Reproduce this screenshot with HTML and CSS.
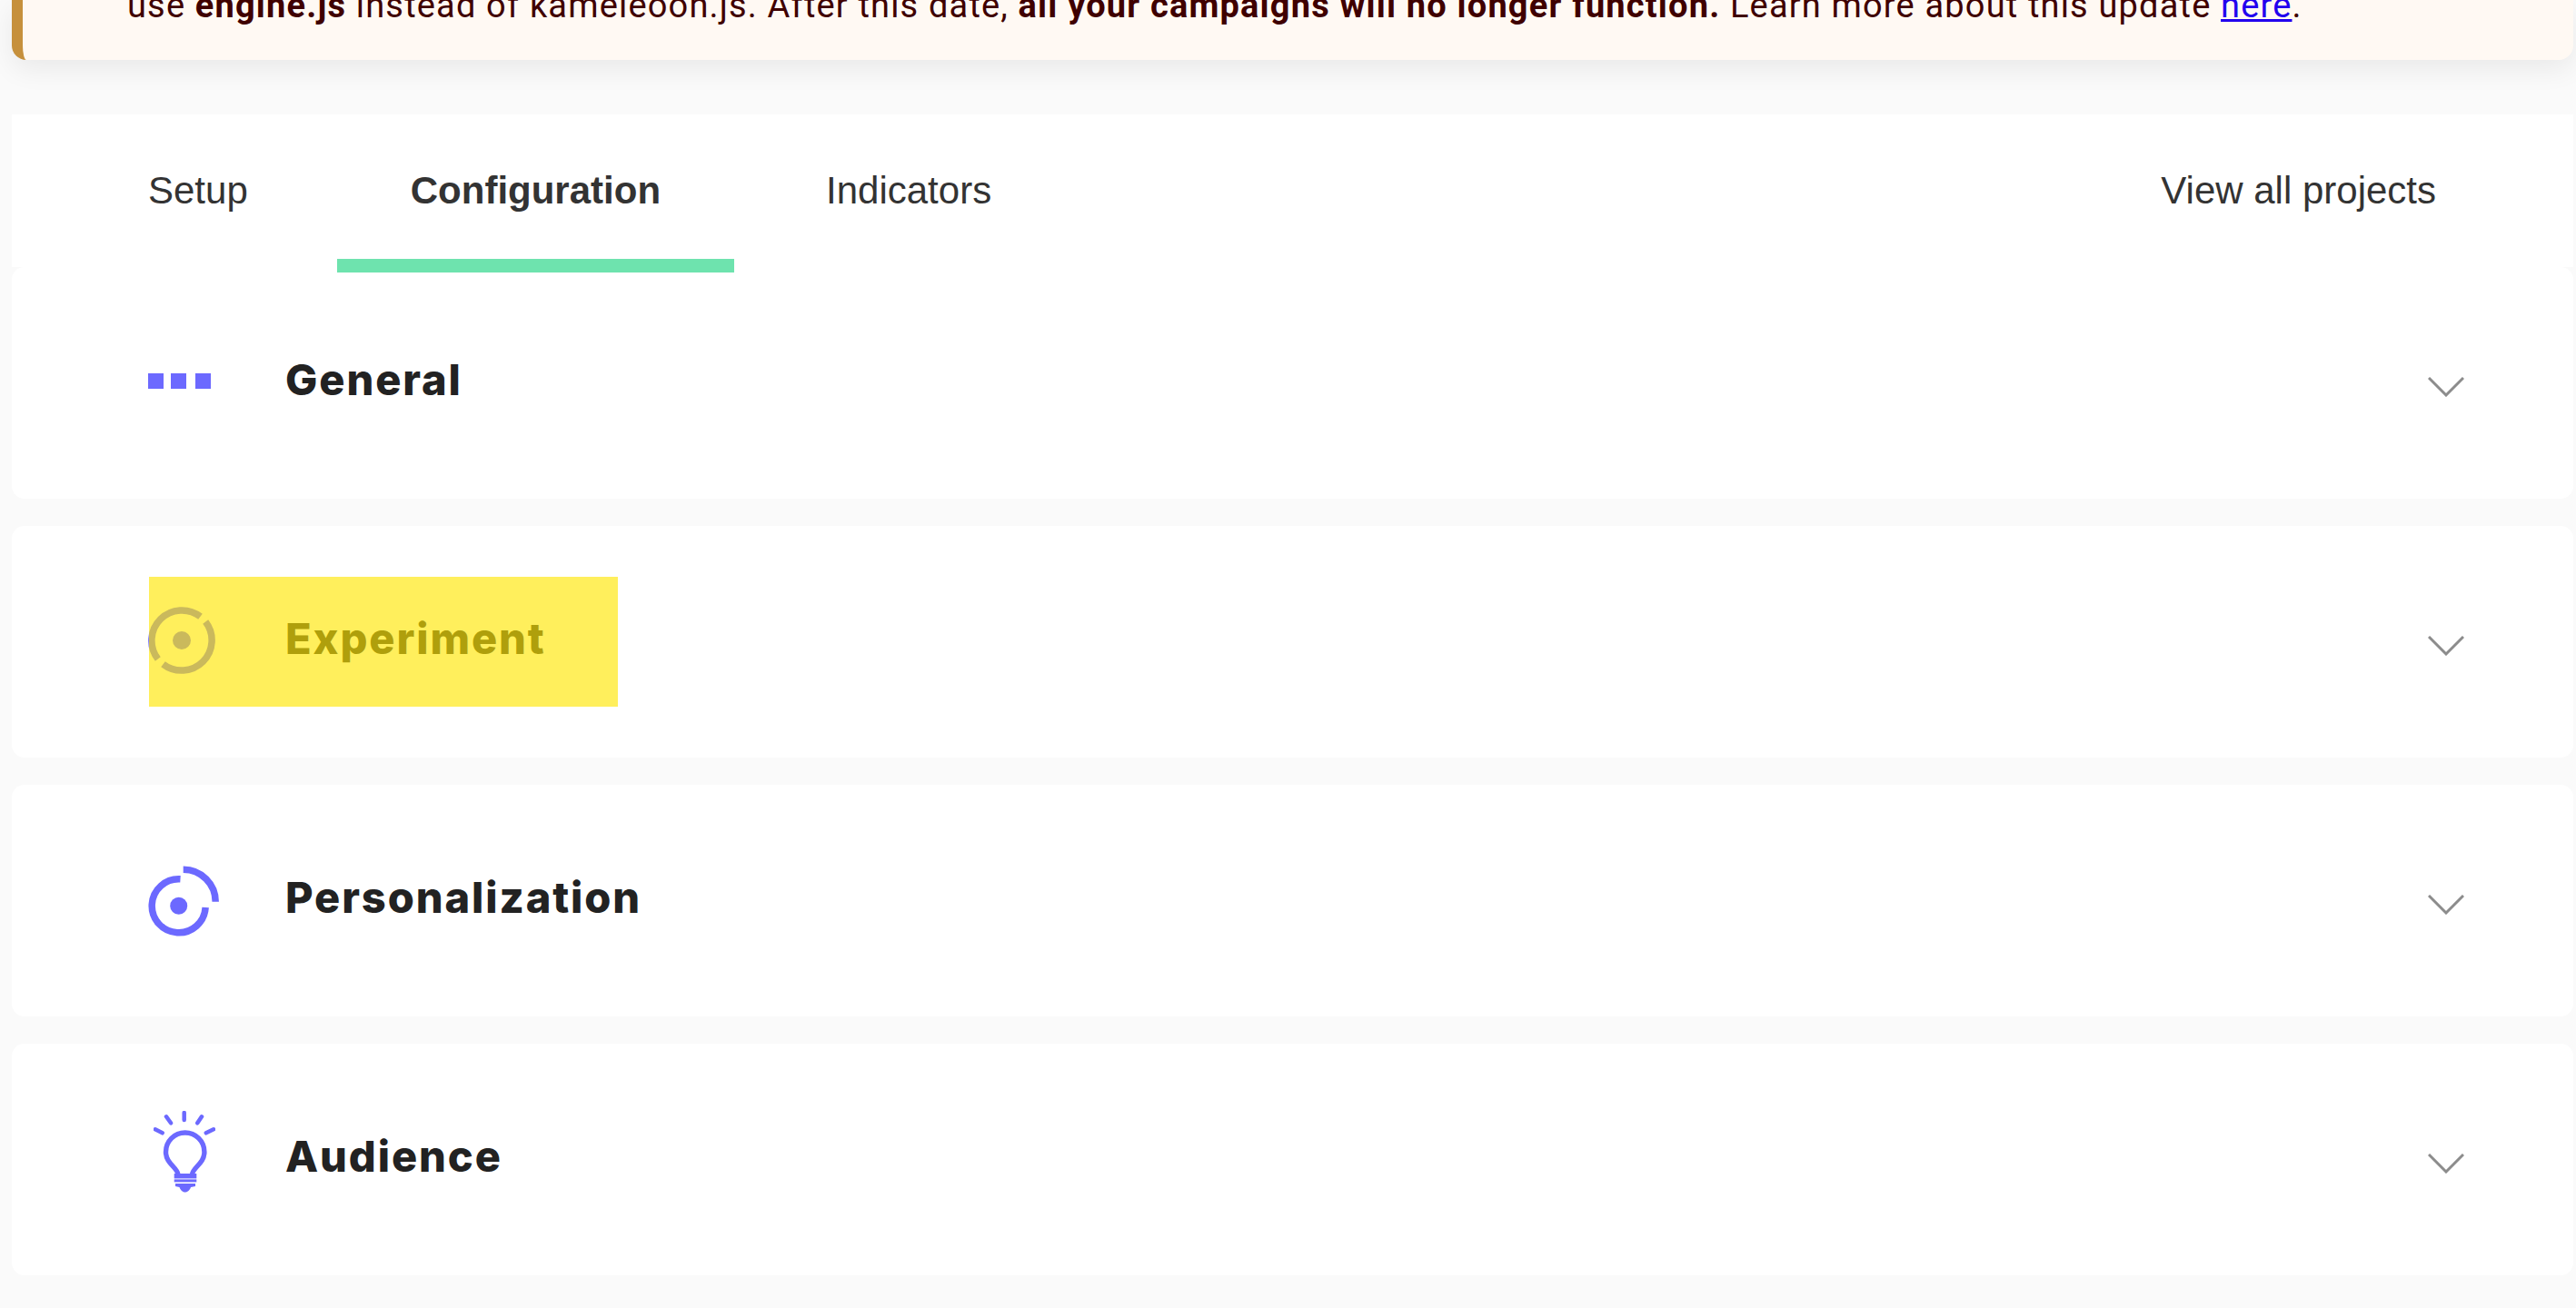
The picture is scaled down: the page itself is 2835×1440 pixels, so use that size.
FILE: index.html
```html
<!DOCTYPE html>
<html lang="en">

<head>
    <meta charset="UTF-8">
    <meta name="viewport" content="width=device-width, initial-scale=1.0">
    <title>Project configuration</title>
    <link rel="stylesheet" href="styles.css">
</head>

<body>

    <div class="notice">
        <p class="notice-text">use <b>engine.js</b> instead of kameleoon.js. After this date, <b>all your campaigns will no longer function.</b> Learn more about this update <a href="#">here</a>.</p>
    </div>

    <nav class="tabs">
        <a href="#" class="tab">Setup</a>
        <a href="#" class="tab active">Configuration</a>
        <a href="#" class="tab">Indicators</a>
        <a href="#" class="tab-right">View all projects</a>
    </nav>

    <div class="section">
        <div class="section-icon">
            <svg class="icon-dots" width="69" height="17" viewBox="0 0 69 17">
                <rect x="0" y="0" width="17" height="17" />
                <rect x="25" y="0" width="17" height="17" />
                <rect x="52" y="0" width="17" height="17" />
            </svg>
        </div>
        <h2>General</h2>
        <svg class="chevron" width="40" height="22" viewBox="0 0 40 22">
            <path d="M1 1L20 20L39 1" />
        </svg>
    </div>

    <div class="section">
        <div class="section-icon">
            <svg class="icon-target" width="74" height="74" viewBox="0 0 74 74">
                <path class="ring" d="M57.5 10.8A33.3 33.3 0 0 0 10.8 57.5" />
                <path class="ring" d="M16.5 63.2A33.3 33.3 0 0 0 63.2 16.5" />
                <circle cx="37" cy="37" r="10" />
            </svg>
        </div>
        <h2>Experiment</h2>
        <svg class="chevron" width="40" height="22" viewBox="0 0 40 22">
            <path d="M1 1L20 20L39 1" />
        </svg>
        <div class="highlight"></div>
    </div>

    <div class="section">
        <div class="section-icon">
            <svg width="78" height="78" viewBox="0 0 78 78">
                <path class="ring" d="M35.5 14.85A29.5 29.5 0 1 0 63.15 46" />
                <path class="ring" d="M38.7 4.2A35.5 35.5 0 0 1 74.2 39.7" />
                <circle cx="33.7" cy="44.3" r="9.5" />
            </svg>
        </div>
        <h2>Personalization</h2>
        <svg class="chevron" width="40" height="22" viewBox="0 0 40 22">
            <path d="M1 1L20 20L39 1" />
        </svg>
    </div>

    <div class="section">
        <div class="section-icon">
            <svg class="icon-bulb" width="68" height="90" viewBox="0 0 68 90">
                <path class="bulb" d="M27 70C26 62 13.5 58 13.5 45.2A21.2 21.2 0 0 1 55.9 45.2C55.9 58 43.4 62 42.4 70" />
                <path class="rays" d="M33.7 2V10M14 6.3L19 13.3M53 6.3L48.3 13.3M1.8 20.3L9.7 24.3M66 20.3L57.8 24.3" />
                <rect x="22.7" y="69" width="24.6" height="5.4" />
                <rect x="22.7" y="75.4" width="24.6" height="3" />
                <path d="M24 80H46V83L41 84C39.5 88 37 89.5 34.7 89.5C32.5 89.5 30 88 28.5 84L24 83Z" />
            </svg>
        </div>
        <h2>Audience</h2>
        <svg class="chevron" width="40" height="22" viewBox="0 0 40 22">
            <path d="M1 1L20 20L39 1" />
        </svg>
    </div>

</body>

</html>
```

FILE: styles.css
```css
* {
    box-sizing: border-box;
}

body {
    margin: 0;
    padding: 0 3px 30px 13px;
    background-color: #fafafa;
    font-family: "Liberation Sans", Arial, sans-serif;
}

.notice {
    height: 66px;
    padding-left: 115px;
    background-color: #fff9f3;
    border-left: 12px solid #c6903c;
    border-radius: 0 0 16px 16px;
    box-shadow: 0 10px 30px rgba(0, 0, 0, .07);
    overflow: hidden;
}

.notice-text {
    margin: -19px 0 0;
    font-family: Roboto, "Liberation Sans", sans-serif;
    font-size: 38px;
    line-height: 50px;
    letter-spacing: 1.17px;
    color: #3f0000;
    white-space: nowrap;
}

.notice-text a {
    color: #2200ee;
}

.tabs {
    position: relative;
    z-index: 1;
    display: flex;
    align-items: center;
    height: 168px;
    margin-top: 60px;
    padding-left: 69px;
    background-color: #fff;
    font-size: 42px;
}

.tab {
    position: relative;
    display: flex;
    align-items: center;
    height: 100%;
    padding: 0 81px;
    margin-right: 20px;
    color: #333;
    text-decoration: none;
}

.tab:first-child {
    margin-right: 17px;
}

.tab.active {
    font-weight: bold;
}

.tab.active::after {
    content: "";
    position: absolute;
    left: 0;
    right: 0;
    bottom: -6px;
    height: 15px;
    background-color: #6ee3ae;
}

.tab-right {
    margin-left: auto;
    margin-right: 151px;
    color: #333;
    text-decoration: none;
}

.section {
    position: relative;
    display: flex;
    align-items: center;
    height: 255px;
    margin-bottom: 30px;
    padding: 0 120px 0 150px;
    background-color: #fff;
    border-radius: 14px;
}

.section:last-child {
    margin-bottom: 0;
}

.section-icon {
    display: flex;
    align-items: center;
    width: 151px;
    height: 90px;
}

.section-icon svg {
    display: block;
    fill: #6c69ff;
}

.section-icon .icon-dots {
    margin-top: -4px;
}

.section-icon .icon-target {
    margin-top: -3px;
}

.section-icon .icon-bulb {
    margin: -17px 0 0 6px;
}

.section h2 {
    flex: 1;
    margin: 0 0 9px;
    font-family: Inter, sans-serif;
    font-size: 47px;
    font-weight: 800;
    letter-spacing: 1.9px;
    color: #222;
}

.ring,
.bulb,
.rays {
    fill: none;
    stroke: #6c69ff;
}

.ring {
    stroke-width: 7.5;
}

.bulb {
    stroke-width: 5.4;
}

.rays {
    stroke-width: 4.5;
    stroke-linecap: round;
}

.chevron {
    margin-top: 8px;
    fill: none;
    stroke: #8c8c8c;
    stroke-width: 3;
}

.highlight {
    position: absolute;
    left: 151px;
    top: 56px;
    width: 516px;
    height: 143px;
    background-color: rgba(255, 230, 0, .64);
}
```
